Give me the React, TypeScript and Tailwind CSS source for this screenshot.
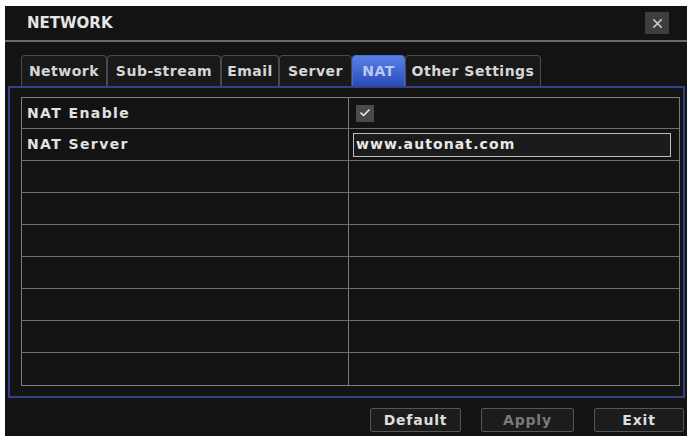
import { Check, X } from 'lucide-react';

const tabs = ['Network', 'Sub-stream', 'Email', 'Server', 'NAT', 'Other Settings'];
const tabWidths: Record<string, string> = {
  Network: 'w-[86px]',
  'Sub-stream': 'w-[114px]',
  Email: 'w-[58px]',
  Server: 'w-[73px]',
  NAT: 'w-[53px]',
  'Other Settings': 'w-[136px]',
};

const App = () => {
  const emptyRows = Array.from({ length: 7 });

  return (
    <div className="h-[440px] w-[687px] bg-white pb-[4px] pl-[5px] pt-[6px] font-['DejaVu_Sans',Verdana,sans-serif]">
      <div className="flex h-full w-[682px] flex-col bg-[#131313]">
        {/* title bar */}
        <div className="flex h-[36px] items-center justify-between border-b-2 border-[#6b6b6b] pl-[22px] pr-[18px]">
          <span className="text-[15px] font-bold text-[#e6e6e6]">NETWORK</span>
          <div className="flex h-[22px] w-[24px] items-center justify-center bg-[#3e3e3e]">
            <X className="h-[15px] w-[15px] text-[#cfcfcf]" strokeWidth={2.5} />
          </div>
        </div>

        {/* tabs */}
        <div className="mt-[13px] flex h-[31px] pl-[16px]">
          {tabs.map((tab) => (
            <div
              key={tab}
              className={`${tabWidths[tab]} flex items-center justify-center whitespace-nowrap rounded-t-[4px] border border-b-0 text-[14px] font-bold tracking-[0.5px] ${
                tab === 'NAT'
                  ? 'border-[#4a6ad8] bg-gradient-to-b from-[#5a80e8] to-[#2a4bb8] text-[#b9c8f4]'
                  : 'border-[#4a4a4a] bg-[#191919] text-[#d6d6d6]'
              }`}
            >
              {tab}
            </div>
          ))}
        </div>

        {/* panel */}
        <div className="ml-[3px] mr-[2px] h-[312px] border-2 border-[#34408a] pb-[10px] pl-[11px] pr-[3px] pt-[9px]">
          <div className="border-[1.5px] border-[#7c7c7c]">
            <div className="flex h-[31px] border-b-[1.5px] border-[#6e6e6e]">
              <div className="flex w-[327px] items-center border-r-[1.5px] border-[#7c7c7c] pl-[5px] text-[14px] font-bold tracking-[1.4px] text-[#e2e2e2]">
                NAT Enable
              </div>
              <div className="flex flex-1 items-center pl-[7px]">
                <div className="flex h-[17px] w-[18px] items-center justify-center bg-[#4a4a4a]">
                  <Check className="h-[12px] w-[12px] text-[#e8e8e8]" strokeWidth={3.5} />
                </div>
              </div>
            </div>
            <div className="flex h-[32px] border-b-[1.5px] border-[#6e6e6e]">
              <div className="flex w-[327px] items-center border-r-[1.5px] border-[#7c7c7c] pl-[5px] text-[14px] font-bold tracking-[1.4px] text-[#e2e2e2]">
                NAT Server
              </div>
              <div className="flex flex-1 items-center pl-[4px] pr-[8px]">
                <div className="flex h-[24px] w-full items-center border-[1.5px] border-[#bdbdbd] bg-[#1b1b1b] pl-[2px] text-[14px] font-bold tracking-[1.1px] text-[#e8e8e8]">
                  www.autonat.com
                </div>
              </div>
            </div>
            {emptyRows.map((_, i) => (
              <div
                key={i}
                className={`flex h-[32px] ${i < emptyRows.length - 1 ? 'border-b-[1.5px] border-[#6e6e6e]' : ''}`}
              >
                <div className="w-[327px] border-r-[1.5px] border-[#7c7c7c]" />
                <div className="flex-1" />
              </div>
            ))}
          </div>
        </div>

        {/* buttons */}
        <div className="mt-[10px] flex justify-end gap-[20px] pr-[3px]">
          <button className="h-[24px] w-[91px] rounded-[2px] border border-[#555] bg-[#1c1c1c] text-[14px] font-bold tracking-[0.8px] text-[#dedede]">
            Default
          </button>
          <button className="h-[24px] w-[93px] rounded-[2px] border border-[#555] bg-[#1c1c1c] text-[14px] font-bold tracking-[0.8px] text-[#7a7a7a]">
            Apply
          </button>
          <button className="h-[24px] w-[90px] rounded-[2px] border border-[#555] bg-[#1c1c1c] text-[14px] font-bold tracking-[0.8px] text-[#dedede]">
            Exit
          </button>
        </div>
      </div>
    </div>
  );
};

export default App;
